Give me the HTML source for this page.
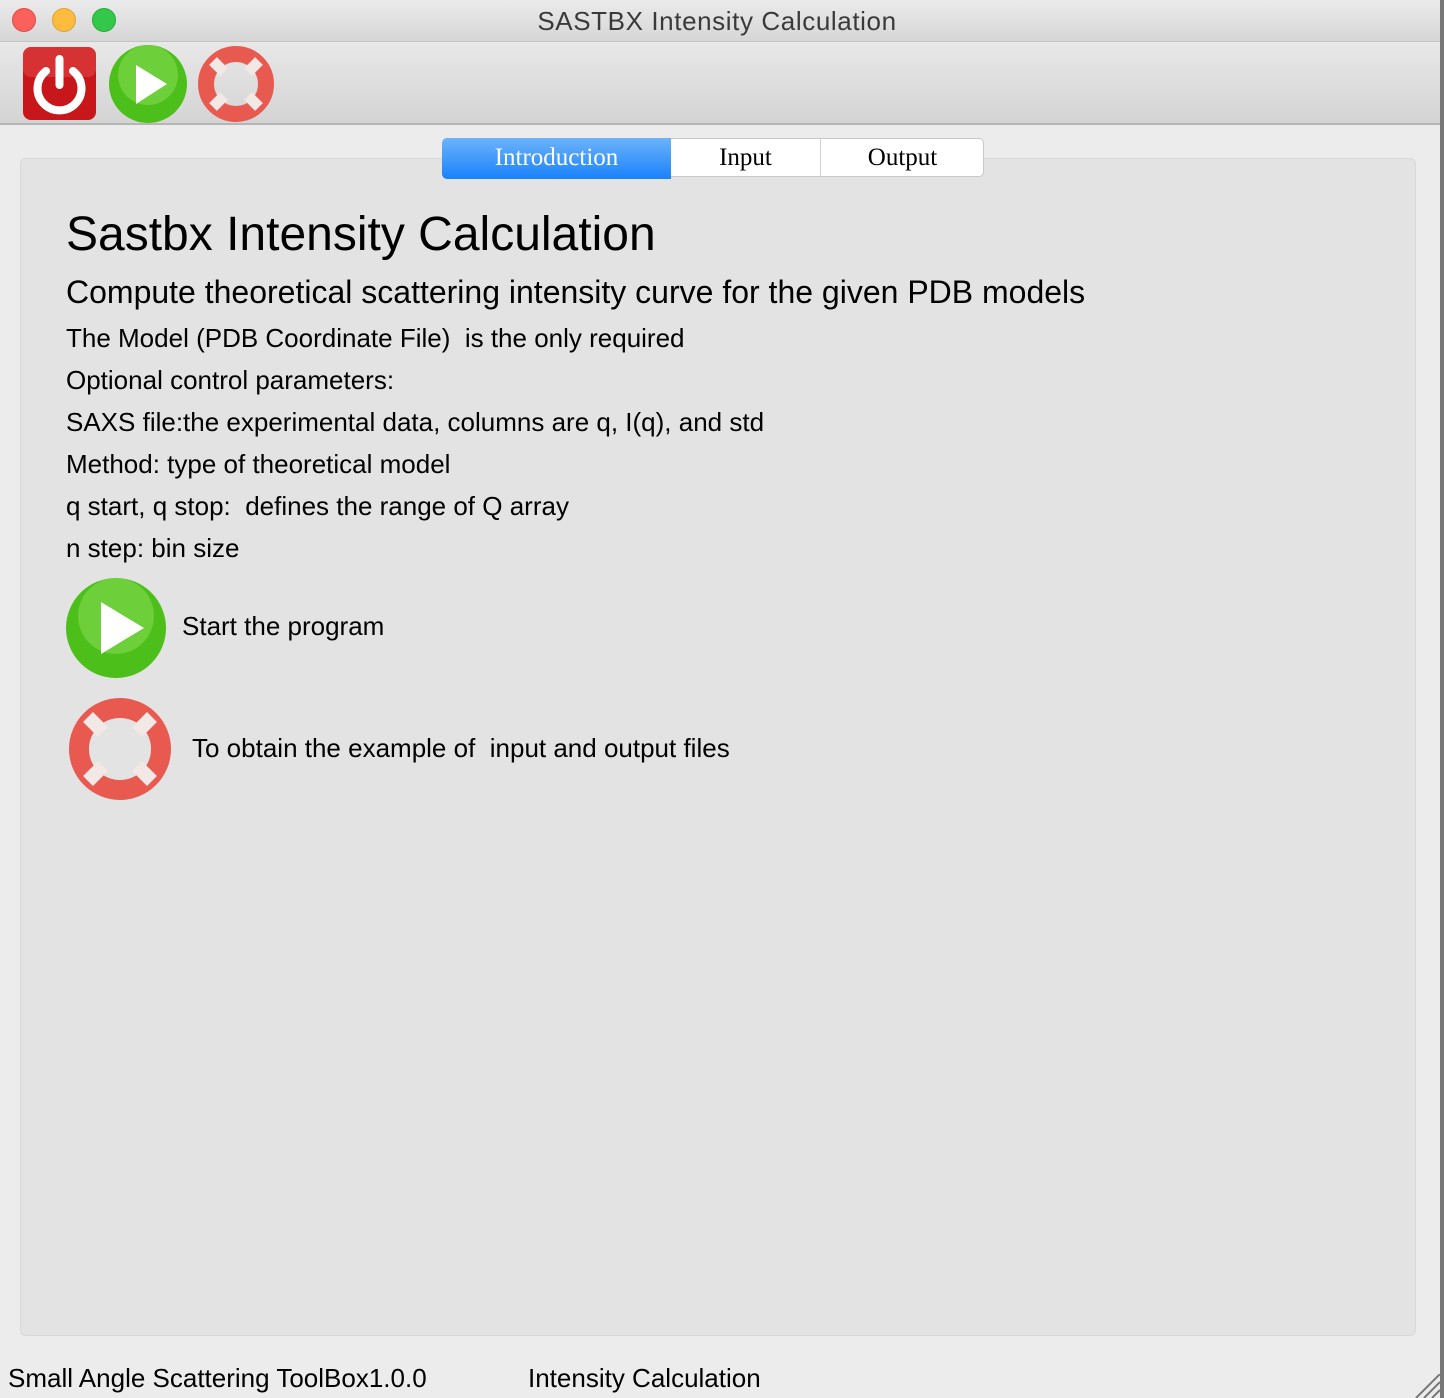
<!DOCTYPE html>
<html><head><style>
body{margin:0;width:1444px;height:1398px;background:#ececec;font-family:"Liberation Sans",sans-serif;position:relative;overflow:hidden}
.a{position:absolute}
.t{position:absolute;left:66px;color:#000;white-space:nowrap}
</style></head><body>
<div class="a" style="left:0;top:0;width:1440px;height:41px;background:linear-gradient(#ebebeb,#d6d6d6);border-bottom:1px solid #c4c4c4"></div>
<div class="a" style="left:12px;top:8px;width:24px;height:24px;border-radius:50%;background:#fc605c;box-sizing:border-box;border:1px solid #de4a45"></div>
<div class="a" style="left:52px;top:8px;width:24px;height:24px;border-radius:50%;background:#fdbc40;box-sizing:border-box;border:1px solid #dea236"></div>
<div class="a" style="left:92px;top:8px;width:24px;height:24px;border-radius:50%;background:#34c84a;box-sizing:border-box;border:1px solid #27aa35"></div>
<div class="a" style="left:0;width:1434px;top:6px;text-align:center;font-size:26px;letter-spacing:0.6px;color:#3a3a3a">SASTBX Intensity Calculation</div>
<div class="a" style="left:0;top:42px;width:1440px;height:81px;background:linear-gradient(#e8e8e8,#d4d4d4);border-bottom:2px solid #b5b5b5"></div>
<div class="a" style="left:1440px;top:0;width:4px;height:1398px;background:#777"></div>
<svg class="a" style="left:10px;top:45px" width="270" height="80">
<rect x="13" y="2" width="73" height="73" rx="8" fill="#c8171a"/>
<rect x="13" y="2" width="73" height="30" rx="8" fill="#e04444" opacity=".6"/>
<path d="M36 26 A22 22 0 1 0 63 26" fill="none" stroke="#fff" stroke-width="8" stroke-linecap="round"/>
<line x1="49.5" y1="14" x2="49.5" y2="40" stroke="#fff" stroke-width="8" stroke-linecap="round"/>
<circle cx="138" cy="39" r="39" fill="#4cbf1a"/>
<circle cx="138" cy="30" r="30" fill="#8ee05a" opacity=".5"/>
<path d="M126 20 L157 39 L126 59 Z" fill="#fff"/>
<circle cx="226" cy="39" r="30" fill="none" stroke="#e85a4f" stroke-width="16"/>
<g stroke="#f2e8e6" stroke-width="11"><line x1="203" y1="16" x2="214" y2="27"/><line x1="249" y1="16" x2="238" y2="27"/><line x1="203" y1="62" x2="214" y2="51"/><line x1="249" y1="62" x2="238" y2="51"/></g>
</svg>
<div class="a" style="left:20px;top:158px;width:1394px;height:1176px;background:#e3e3e3;border:1px solid #d8d8d8;border-radius:6px"></div>
<div class="a" style="left:442px;top:138px;width:542px;height:39px;background:#fff;border:1px solid #c8c8c8;border-radius:5px;box-sizing:border-box"></div>
<div class="a" style="left:442px;top:138px;width:229px;height:41px;background:linear-gradient(#6cb3fa,#1a82fb);border-radius:5px 0 0 5px;color:#fff;font-family:'Liberation Serif',serif;font-size:25px;text-align:center;line-height:39px">Introduction</div>
<div class="a" style="left:820px;top:139px;width:1px;height:37px;background:#d0d0d0"></div>
<div class="a" style="left:671px;top:138px;width:149px;font-family:'Liberation Serif',serif;font-size:25px;text-align:center;line-height:39px">Input</div>
<div class="a" style="left:821px;top:138px;width:163px;font-family:'Liberation Serif',serif;font-size:25px;text-align:center;line-height:39px">Output</div>
<div class="t" style="top:207px;font-size:48px">Sastbx Intensity Calculation</div>
<div class="t" style="top:274px;font-size:32px">Compute theoretical scattering intensity curve for the given PDB models</div>
<div class="t" style="top:323px;font-size:26px">The Model (PDB Coordinate File)&nbsp; is the only required</div>
<div class="t" style="top:365px;font-size:26px">Optional control parameters:</div>
<div class="t" style="top:407px;font-size:26px">SAXS file:the experimental data, columns are q, I(q), and std</div>
<div class="t" style="top:449px;font-size:26px">Method: type of theoretical model</div>
<div class="t" style="top:491px;font-size:26px">q start, q stop:&nbsp; defines the range of Q array</div>
<div class="t" style="top:533px;font-size:26px">n step: bin size</div>
<svg class="a" style="left:66px;top:578px" width="110" height="225">
<circle cx="50" cy="50" r="50" fill="#4cbf1a"/>
<circle cx="50" cy="38" r="38" fill="#8ee05a" opacity=".5"/>
<path d="M35 24 L78 50 L35 76 Z" fill="#fff"/>
<circle cx="54" cy="171" r="41" fill="none" stroke="#e85a4f" stroke-width="20"/>
<g stroke="#f2e8e6" stroke-width="14"><line x1="22" y1="139" x2="37" y2="154"/><line x1="86" y1="139" x2="71" y2="154"/><line x1="22" y1="203" x2="37" y2="188"/><line x1="86" y1="203" x2="71" y2="188"/></g>
</svg>
<div class="t" style="left:182px;top:611px;font-size:26px">Start the program</div>
<div class="t" style="left:192px;top:733px;font-size:26px">To obtain the example of&nbsp; input and output files</div>
<div class="t" style="left:8px;top:1363px;font-size:26px">Small Angle Scattering ToolBox1.0.0</div>
<div class="t" style="left:528px;top:1363px;font-size:26px">Intensity Calculation</div>
<svg class="a" style="left:1414px;top:1374px" width="26" height="24"><g stroke="#777" stroke-width="2"><line x1="2" y1="24" x2="26" y2="0"/><line x1="10" y1="24" x2="26" y2="8"/><line x1="18" y1="24" x2="26" y2="16"/></g></svg>
</body></html>
